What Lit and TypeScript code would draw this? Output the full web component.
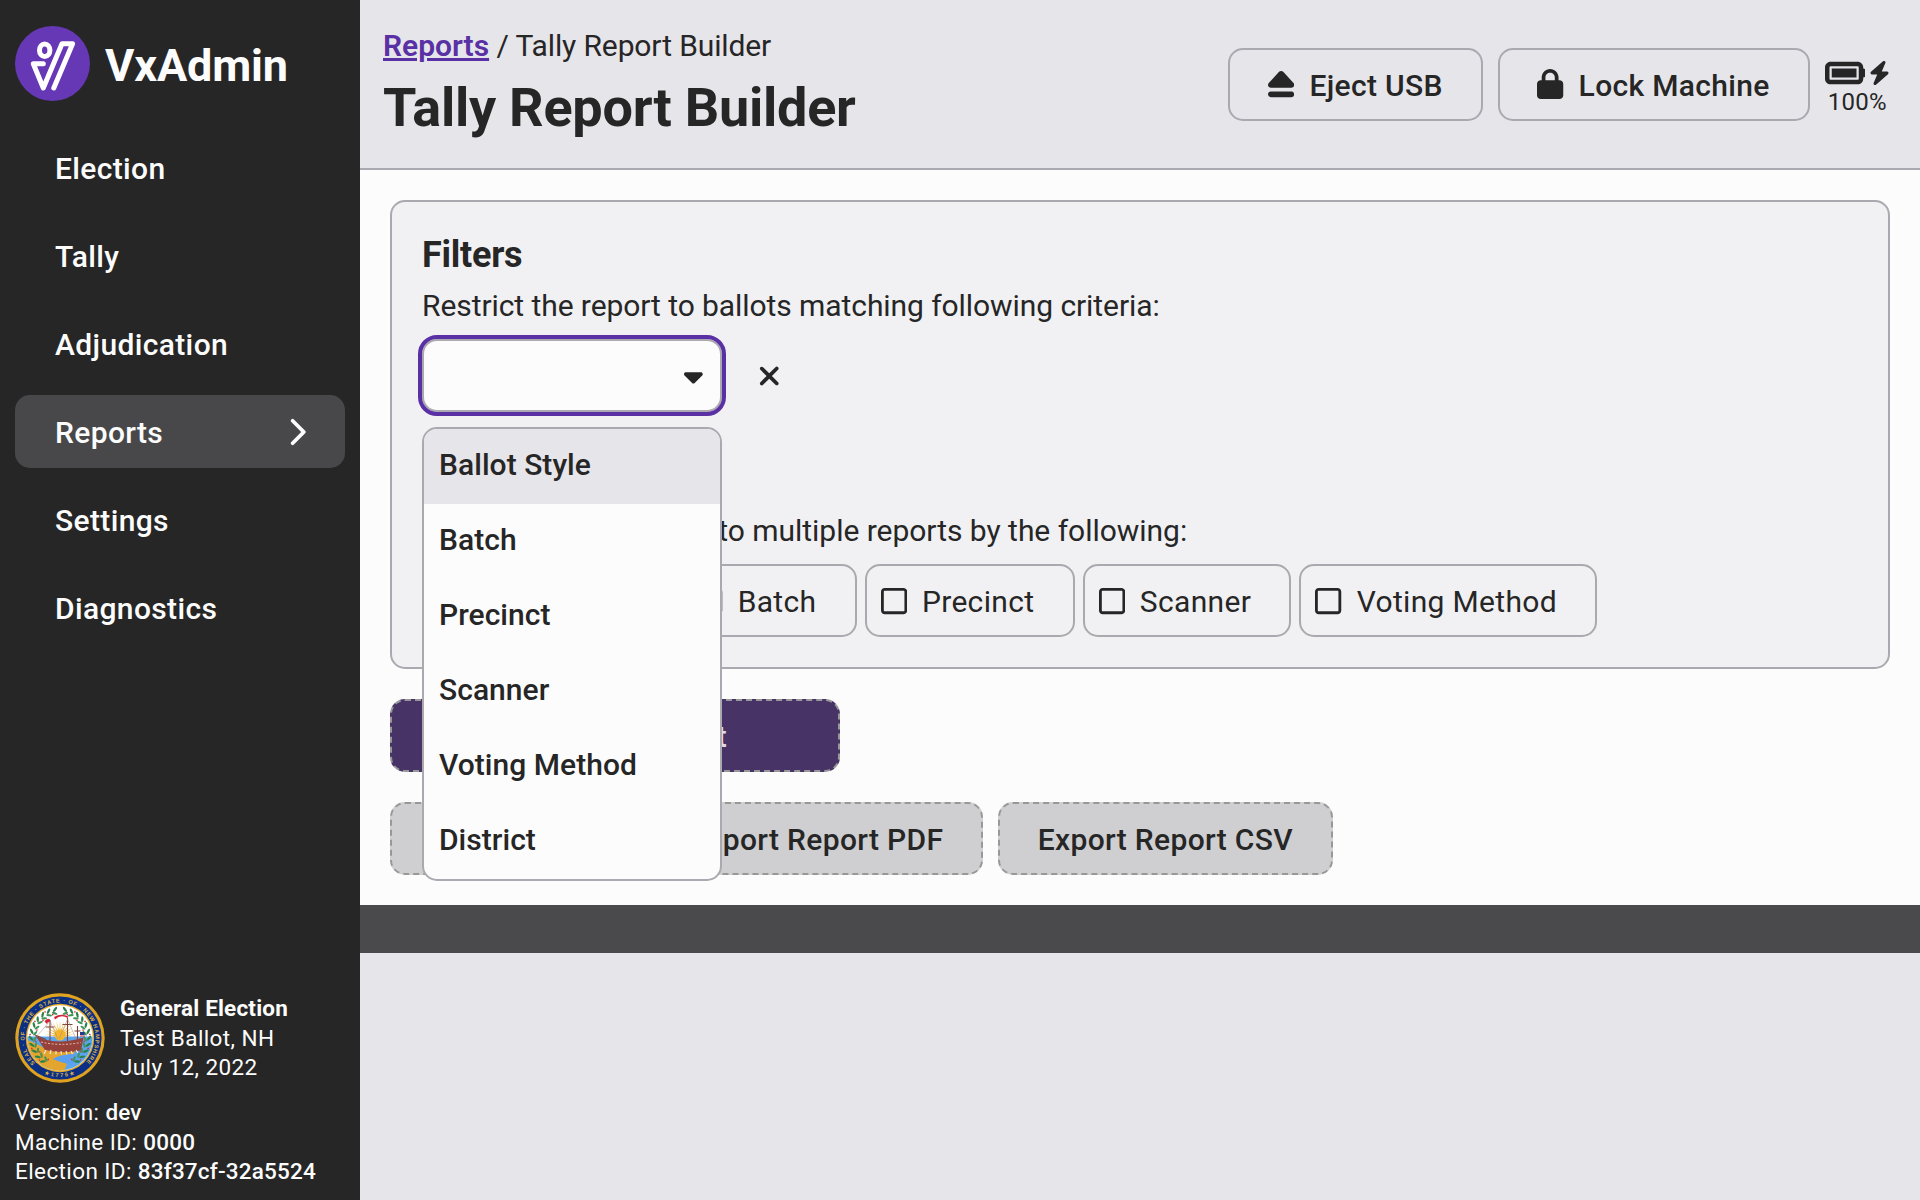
import { LitElement, html, css, svg } from "lit";
import { customElement, property } from "lit/decorators.js";
import { classMap } from "lit/directives/class-map.js";

const ICONS: Record<string, [number, string]> = {
  eject: [448, "M224 32c13.5 0 26.3 5.6 35.4 15.6l176 192c12.9 14 16.2 34.3 8.6 51.8S419 320 400 320H48c-19 0-36.3-11.2-43.9-28.7s-4.3-37.7 8.6-51.8l176-192C197.7 37.6 210.5 32 224 32zM0 432c0-26.5 21.5-48 48-48H400c26.5 0 48 21.5 48 48s-21.5 48-48 48H48c-26.5 0-48-21.5-48-48z"],
  lock: [448, "M144 144v48H304V144c0-44.2-35.8-80-80-80s-80 35.8-80 80zM80 192V144C80 64.5 144.5 0 224 0s144 64.5 144 144v48h16c35.3 0 64 28.7 64 64V448c0 35.3-28.7 64-64 64H64c-35.3 0-64-28.7-64-64V256c0-35.3 28.7-64 64-64H80z"],
  battery: [576, "M464 160c8.8 0 16 7.2 16 16V336c0 8.8-7.2 16-16 16H80c-8.8 0-16-7.2-16-16V176c0-8.8 7.2-16 16-16H464zM80 96C35.8 96 0 131.8 0 176V336c0 44.2 35.8 80 80 80H464c44.2 0 80-35.8 80-80V320c17.7 0 32-14.3 32-32V224c0-17.7-14.3-32-32-32V176c0-44.2-35.8-80-80-80H80zm368 96H96V320H448V192z"],
  bolt: [448, "M349.4 44.6c5.9-13.7 1.5-29.7-10.6-38.5s-28.6-8-39.9 1.8l-256 224c-10 8.8-13.6 22.9-8.9 35.3S50.7 288 64 288H175.5L98.6 467.4c-5.9 13.7-1.5 29.7 10.6 38.5s28.6 8 39.9-1.8l256-224c10-8.8 13.6-22.9 8.9-35.3s-16.6-20.7-30-20.7H272.5L349.4 44.6z"],
  caret: [320, "M137.4 374.6c12.5 12.5 32.8 12.5 45.3 0l128-128c9.2-9.2 11.9-22.9 6.9-34.9s-16.6-19.8-29.6-19.8L32 192c-12.9 0-24.6 7.8-29.6 19.8s-2.2 25.7 6.9 34.9l128 128z"],
  xmark: [384, "M342.6 150.6c12.5-12.5 12.5-32.8 0-45.3s-32.8-12.5-45.3 0L192 210.7 86.6 105.4c-12.5-12.5-32.8-12.5-45.3 0s-12.5 32.8 0 45.3L146.7 256 41.4 361.4c-12.5 12.5-12.5 32.8 0 45.3s32.8 12.5 45.3 0L192 301.3 297.4 406.6c12.5 12.5 32.8 12.5 45.3 0s12.5-32.8 0-45.3L237.3 256 342.6 150.6z"],
  chevron: [320, "M310.6 233.4c12.5 12.5 12.5 32.8 0 45.3l-192 192c-12.5 12.5-32.8 12.5-45.3 0s-12.5-32.8 0-45.3L242.7 256 73.4 86.6c-12.5-12.5-12.5-32.8 0-45.3s32.8-12.5 45.3 0l192 192z"],
  square: [448, "M384 80c8.8 0 16 7.2 16 16V416c0 8.8-7.2 16-16 16H64c-8.8 0-16-7.2-16-16V96c0-8.8 7.2-16 16-16H384zM64 32C28.7 32 0 60.7 0 96V416c0 35.3 28.7 64 64 64H384c35.3 0 64-28.7 64-64V96c0-35.3-28.7-64-64-64H64z"],
};

@customElement("vx-icon")
export class VxIcon extends LitElement {
  @property() name = "square";

  static styles = css`
    :host { display: inline-flex; flex: none; }
    svg { display: block; height: 1em; width: auto; fill: currentColor; }
  `;

  render() {
    const [width, path] = ICONS[this.name];
    return html`<svg viewBox="0 0 ${width} 512"><path d=${path}></path></svg>`;
  }
}

@customElement("vx-logo")
export class VxLogo extends LitElement {
  static styles = css`
    :host { display: block; flex: none; width: 75px; height: 75px; }
    svg { display: block; }
    .disc { fill: #6638b6; }
    .mark { fill: none; stroke: #fff; stroke-width: 5; stroke-linecap: round; stroke-linejoin: round; }
  `;

  render() {
    return html`<svg width="75" height="75" viewBox="0 0 75 75">
      <circle class="disc" cx="37.5" cy="37.5" r="37.5"></circle>
      <ellipse class="mark" cx="29.7" cy="24.3" rx="5.2" ry="6.3"></ellipse>
      <path class="mark" d="M28.3 37.7H18.3L28.3 62L47 17.8H57.6L38.8 62"></path>
    </svg>`;
  }
}

@customElement("state-seal")
export class StateSeal extends LitElement {
  static styles = css`
    :host { display: block; flex: none; width: 90px; height: 90px; }
    svg { display: block; }
    text { font-family: "Liberation Sans", sans-serif; font-weight: 700; font-size: 5.6px; fill: #d9b04a; }
  `;

  render() {
    const leaves = [];
    for (const side of [1, -1]) {
      for (let i = 0; i < 11; i++) {
        leaves.push(svg`<g transform="rotate(${side * (13 + i * 13.4)} 45 45) translate(45 0) scale(${side} 1) translate(-45 0)">
          <ellipse cx="43.4" cy="16" rx="3" ry="1.2" fill="#2c8048" transform="rotate(38 43.4 16)"></ellipse>
          <ellipse cx="44.6" cy="19.8" rx="2.9" ry="1.1" fill="#3f9457" transform="rotate(-32 44.6 19.8)"></ellipse>
          <circle cx="46.8" cy="${i % 2 ? 15 : 20.6}" r="0.8" fill="#d3283c"></circle>
        </g>`);
      }
    }
    const rays = [];
    for (let i = 0; i < 13; i++) {
      rays.push(svg`<path d="M44.2 43L45 27.5L45.8 43z" fill="#f0b429" transform="rotate(${-84 + i * 14} 45 43)"></path>`);
    }
    return html`<svg width="90" height="90" viewBox="0 0 90 90">
      <defs>
        <path id="arc-top" d="M19.9 70.1A35.5 35.5 0 1 1 70.1 70.1"></path>
        <path id="arc-bottom" d="M29 80.6A39 39 0 0 0 61 80.6"></path>
        <clipPath id="inner"><circle cx="45" cy="45" r="32.6"></circle></clipPath>
      </defs>
      <circle cx="45" cy="45" r="44.7" fill="#dfa31f"></circle>
      <circle cx="45" cy="45" r="41.6" fill="#0a2f84"></circle>
      <circle cx="45" cy="45" r="34.2" fill="#e5ac2a"></circle>
      <circle cx="45" cy="45" r="32.8" fill="#fff"></circle>
      <g clip-path="url(#inner)">
        <rect x="10" y="43.5" width="70" height="36" fill="#5aa5ee"></rect>
        <path d="M10 46Q22 51 29 55Q44 57 62 55L58 62Q46 62 38 66L52 71L48 80H14z" fill="#e3a52e"></path>
        <path d="M38 66Q46 61 60 61L64 66Q54 72 46 69z" fill="#5b9ff0"></path>
        <path d="M41 70L45 73L51 70L49 80H42z" fill="#e3a52e"></path>
        ${rays}
        <circle cx="45" cy="42" r="5.5" fill="#f2b52c"></circle>
      </g>
      ${leaves}
      <path d="M20.5 42.5L29 46.5Q45 50.5 61 46.5L68.5 44.5L66 57.5Q46 61 30 57z" fill="#96423a"></path>
      <path d="M26 49Q45 53.5 66 49.5" stroke="#e8c9c0" stroke-width="0.9" stroke-dasharray="2 1.6" fill="none"></path>
      <path d="M20 42L31 46.5M35 27V48M52.5 25V48M62.5 33V46M30.5 34H39.5M47.5 31.5H57.5M59.5 38H65.5" stroke="#7d4038" stroke-width="1.1" fill="none"></path>
      <path d="M35 28L22 43M35 28L43 46M52.5 26L44 46M52.5 26L61 46" stroke="#a8867c" stroke-width="0.5" fill="none"></path>
      <path d="M35 26.5Q32 24.5 29.5 28.5L32 31Q33 28 35 29zM52.5 25Q46 21 40 26.5L39 24Q46 20 53.5 23.5z" fill="#d5273c"></path>
      <rect x="65" y="39" width="4.6" height="3" fill="#273a86"></rect>
      <path d="M65 43H70" stroke="#c8303e" stroke-width="1"></path>
      <path d="M31 57L29 61M36 57L35 61M41 58V61.5M46 58L46.5 61.5M51 58L52 61.5M56 58L57.5 61M61 57L63 60" stroke="#f2ece4" stroke-width="1.1"></path>
      <text textLength="166"><textPath href="#arc-top" textLength="166">SEAL · OF · THE · STATE · OF · NEW HAMPSHIRE</textPath></text>
      <text textLength="32"><textPath href="#arc-bottom" textLength="32">★1776★</textPath></text>
    </svg>`;
  }
}

@customElement("app-root")
export class AppRoot extends LitElement {
  static styles = css`
    :host {
      display: block;
      font-family: Roboto, "Liberation Sans", sans-serif;
      font-size: 30px;
      line-height: 1.3;
      color: #262626;
    }
    * { box-sizing: border-box; }
    .screen { display: flex; width: 1920px; height: 1200px; overflow: hidden; background: #e6e5ea; }

    .sidebar { display: flex; flex-direction: column; width: 360px; flex: none; background: #262626; color: #fcfcfc; padding: 26px 15px 14px; }
    .brand { display: flex; align-items: center; gap: 15px; font-size: 45px; font-weight: 700; height: 75px; margin-bottom: 30px; letter-spacing: -0.15px; }
    .brand-name { padding-top: 5px; }
    .nav { display: flex; flex-direction: column; gap: 15px; }
    .nav-item { display: flex; align-items: center; justify-content: space-between; height: 73px; padding: 0 39px 0 40px; border-radius: 15px; font-weight: 500; letter-spacing: 0.36px; }
    .nav-item.active { background: #48484a; }
    .label { padding-top: 2px; }
    .info { margin-top: auto; font-size: 22.5px; letter-spacing: 0.4px; }
    .election { display: flex; align-items: center; gap: 15px; margin-bottom: 15px; }
    .bold { font-weight: 700; letter-spacing: 0.18px; }
    .medium { font-weight: 500; letter-spacing: 0.2px; }

    .main { flex: 1; min-width: 0; display: flex; flex-direction: column; }
    .header { display: flex; align-items: center; justify-content: space-between; height: 170px; flex: none; border-bottom: 2px solid #aaa9b0; padding: 0 30px 0 23px; }
    .crumbs { letter-spacing: -0.12px; }
    .title { font-size: 54px; font-weight: 700; margin: 8px 0 0; line-height: 70px; letter-spacing: -0.25px; }
    .crumb { color: #5a30a5; font-weight: 600; text-decoration: underline; text-decoration-thickness: 3px; letter-spacing: 0; }
    .actions { display: flex; align-items: center; gap: 15px; }
    .battery { display: flex; flex-direction: column; align-items: center; font-size: 24px; line-height: 31px; letter-spacing: 0.3px; padding-top: 10px; gap: 2px; }
    .battery-icons { display: flex; align-items: center; gap: 4px; height: 24px; }
    .battery-full { font-size: 36px; }

    .button { display: inline-flex; align-items: center; justify-content: center; gap: 15px; height: 73px; padding: 0 37.8px; border: 2px solid #aaa9b0; border-radius: 15px; font-weight: 500; white-space: nowrap; letter-spacing: 0.33px; }
    .button.disabled { border: 2px dashed #989898; background: #cfcfd1; }
    .button.primary { width: 450px; background: #473366; color: #e0dde6; align-self: flex-start; }

    .content { background: #fcfcfc; padding: 30px; display: flex; flex-direction: column; gap: 30px; flex: none; height: 735px; }
    .card { background: #f1f1f3; border: 2px solid #aaa9b0; border-radius: 15px; padding: 30px; height: 469px; display: flex; flex-direction: column; }
    .subtitle { font-size: 36px; font-weight: 700; line-height: 46px; margin: 0; letter-spacing: -0.25px; }
    .hint { margin: 0; letter-spacing: -0.075px; }
    .hint.split { letter-spacing: -0.03px; }
    .filters { padding-top: 8px; flex: 1; }
    .filter-row { display: flex; align-items: center; gap: 36px; margin-top: 14px; }
    .select { position: relative; width: 300px; height: 73px; border: 2px solid #aaa9b0; border-radius: 15px; background: #fcfcfc; outline: 4px solid #5a30a5; display: flex; align-items: center; justify-content: flex-end; padding-right: 17px; }
    .menu { position: absolute; z-index: 2; top: 86px; left: -2px; width: 300px; border: 2px solid #aaa9b0; border-radius: 15px; background: #fcfcfc; overflow: hidden; font-weight: 500; letter-spacing: 0.04px; }
    .option { height: 75px; padding: 16px 15px; }
    .option.focused { background: #e6e5ea; }
    .checks { display: flex; gap: 8px; margin-top: 14px; }
    .check { padding: 0 38.25px 0 14px; font-weight: 400; }
    .row { display: flex; gap: 15px; }
    .strip { height: 48px; background: #4a4a4c; flex: none; }
  `;

  private nav = ["Election", "Tally", "Adjudication", "Reports", "Settings", "Diagnostics"];
  private options = ["Ballot Style", "Batch", "Precinct", "Scanner", "Voting Method", "District"];

  render() {
    return html`<div class="screen">
      <aside class="sidebar">
        <div class="brand"><vx-logo></vx-logo><span class="brand-name">VxAdmin</span></div>
        <nav class="nav">
          ${this.nav.map((label) => {
            const active = label === "Reports";
            return html`<div class=${classMap({ "nav-item": true, active })}>
              <span class="label">${label}</span>${active ? html`<vx-icon name="chevron"></vx-icon>` : ""}
            </div>`;
          })}
        </nav>
        <div class="info">
          <div class="election">
            <state-seal></state-seal>
            <div>
              <div class="bold">General Election</div>
              <div>Test Ballot, NH</div>
              <div>July 12, 2022</div>
            </div>
          </div>
          <div>Version: <span class="medium">dev</span></div>
          <div>Machine ID: <span class="medium">0000</span></div>
          <div>Election ID: <span class="medium">83f37cf-32a5524</span></div>
        </div>
      </aside>
      <main class="main">
        <header class="header">
          <div>
            <div class="crumbs"><span class="crumb">Reports</span> / Tally Report Builder</div>
            <h1 class="title">Tally Report Builder</h1>
          </div>
          <div class="actions">
            <div class="button"><vx-icon name="eject"></vx-icon><span class="label">Eject USB</span></div>
            <div class="button"><vx-icon name="lock"></vx-icon><span class="label">Lock Machine</span></div>
            <div class="battery">
              <div class="battery-icons"><vx-icon class="battery-full" name="battery"></vx-icon><vx-icon name="bolt"></vx-icon></div>
              <div>100%</div>
            </div>
          </div>
        </header>
        <section class="content">
          <div class="card">
            <h3 class="subtitle">Filters</h3>
            <div class="filters">
              <p class="hint">Restrict the report to ballots matching following criteria:</p>
              <div class="filter-row">
                <div class="select">
                  <vx-icon name="caret"></vx-icon>
                  <div class="menu">
                    ${this.options.map((o, i) => html`<div class=${classMap({ option: true, focused: i === 0 })}>${o}</div>`)}
                  </div>
                </div>
                <vx-icon name="xmark"></vx-icon>
              </div>
            </div>
            <p class="hint split">Organize the results into multiple reports by the following:</p>
            <div class="checks">
              ${this.options.slice(0, 5).map((o) => html`<div class="button check"><vx-icon name="square"></vx-icon><span class="label">${o}</span></div>`)}
            </div>
          </div>
          <div class="button disabled primary"><span class="label">Generate Report</span></div>
          <div class="row">
            <div class="button disabled"><span class="label">Print Report</span></div>
            <div class="button disabled"><span class="label">Export Report PDF</span></div>
            <div class="button disabled"><span class="label">Export Report CSV</span></div>
          </div>
        </section>
        <div class="strip"></div>
      </main>
    </div>`;
  }
}
